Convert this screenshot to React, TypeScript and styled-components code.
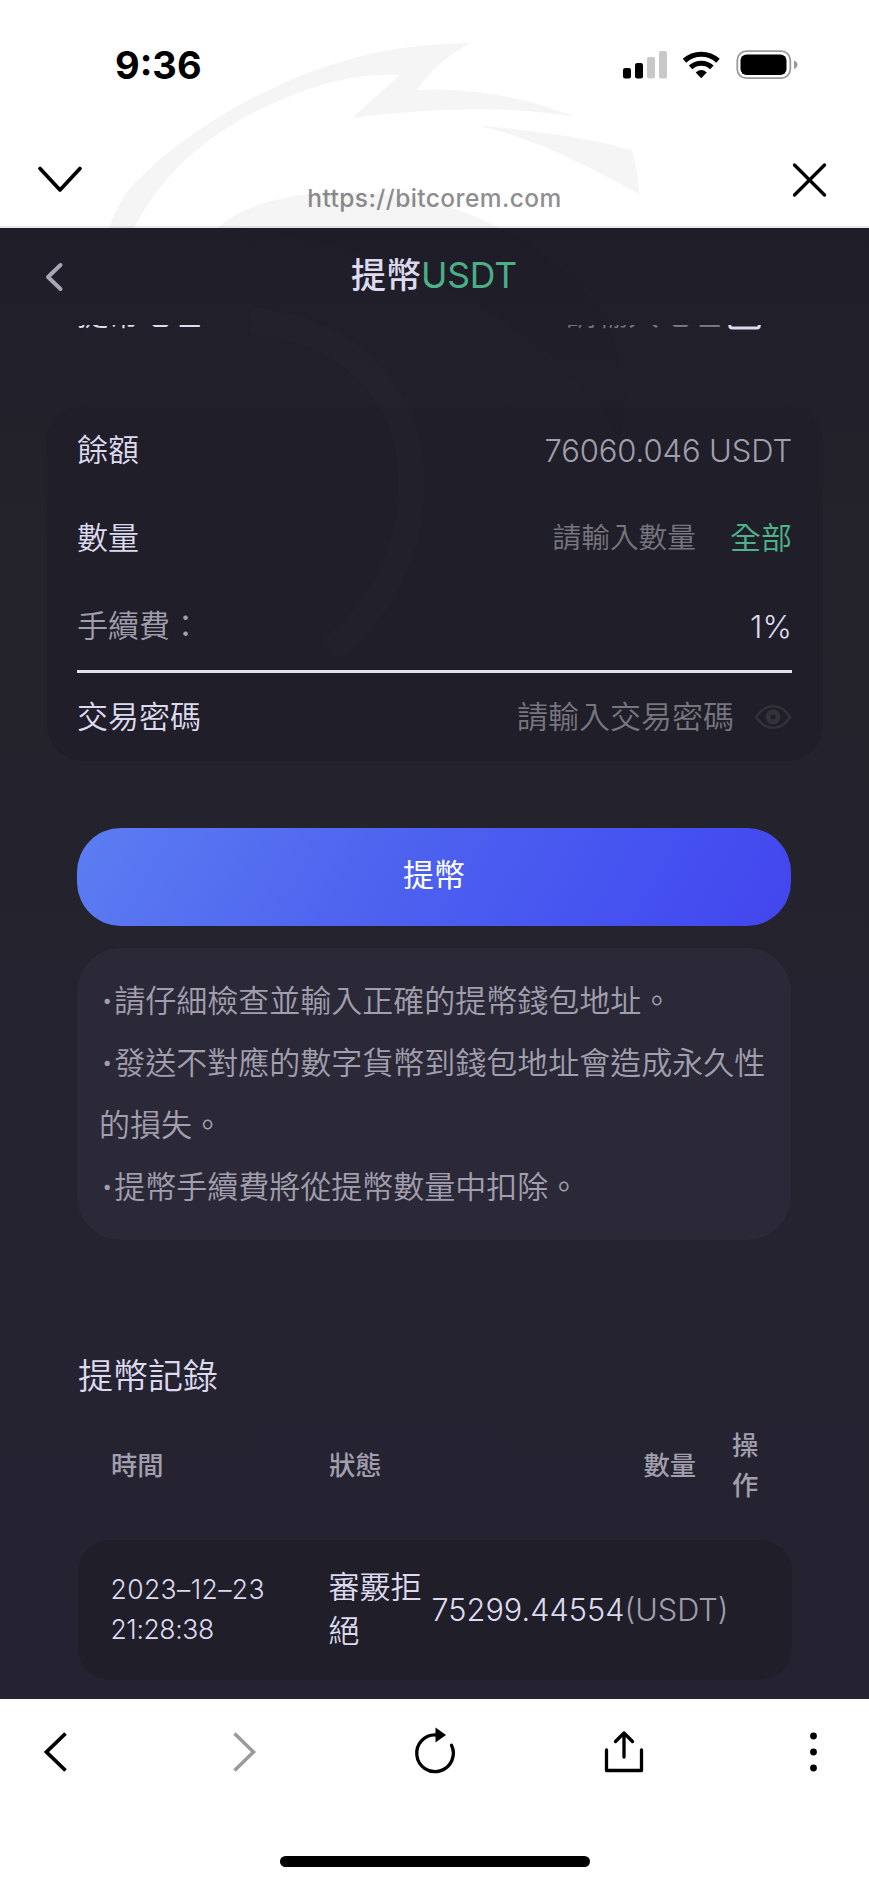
import React from "react";
import styled, { createGlobalStyle } from "styled-components";

const GlobalStyle = createGlobalStyle`
  * { box-sizing: border-box; }
  body { margin: 0; background: #fff; }
`;

const Screen = styled.div`
  position: relative;
  display: flex;
  flex-direction: column;
  width: 869px;
  height: 1885px;
  overflow: hidden;
  background: #fff;
  font-family: Inter, "Noto Sans CJK TC", sans-serif;
  font-weight: 350;
`;

const Watermark = styled.svg`
  position: absolute;
  top: 0;
  left: 0;
  pointer-events: none;
`;

const StatusBar = styled.div`
  display: flex;
  align-items: center;
  justify-content: space-between;
  height: 130px;
  padding: 0 71px 0 115px;
`;

const Clock = styled.div`
  font-size: 38px;
  font-weight: 700;
  line-height: 46px;
  color: #000;
`;

const StatusIcons = styled.svg`
  display: block;
`;

const AddressBar = styled.div`
  display: grid;
  grid-template-columns: 1fr auto 1fr;
  height: 98px;
  padding: 30px 36px 0;
  border-bottom: 2px solid #e9e9ea;
`;

const CloseIcon = styled.svg`
  justify-self: end;
  margin-right: 5px;
`;

const Url = styled.div`
  padding-top: 23px;
  font-size: 24.5px;
  font-weight: 500;
  line-height: 30px;
  letter-spacing: 0.4px;
  color: #8e8e90;
`;

const Page = styled.main`
  display: flex;
  flex-direction: column;
  height: 1471px;
  background: linear-gradient(180deg, #1f1d27 0%, #211f29 8%, #24222b 22%, #24222c 42%, #252330 60%, #252331 100%);
`;

const PageHeader = styled.header`
  display: grid;
  grid-template-columns: 60px 1fr 60px;
  align-items: center;
  height: 97px;
  padding: 0 45px 0 44px;
`;

const Title = styled.h1`
  margin: 0;
  padding-bottom: 3px;
  text-align: center;
  font-size: 35px;
  font-weight: 500;
  line-height: 94px;
  color: #dedbf0;
`;

const Currency = styled.span`
  font-size: 35.5px;
  font-weight: 400;
  letter-spacing: -0.2px;
  color: #4cb38a;
`;

const Scroller = styled.div`
  flex: 1;
  overflow: hidden;
`;

const AddressRow = styled.div`
  display: flex;
  justify-content: space-between;
  align-items: center;
  height: 40px;
  margin: -31px 108px 0 77px;
`;

const AddressField = styled.div`
  display: flex;
  align-items: center;
  gap: 7px;
`;

const Card = styled.section`
  margin: 72px 46px 0 47px;
  padding: 0 31px 0 30px;
  border-radius: 36px;
  background: #201e28;
`;

const Row = styled.div<{ $lined?: boolean }>`
  display: flex;
  justify-content: space-between;
  align-items: center;
  height: ${(p) => (p.$lined ? 91 : 88)}px;
  border-bottom: ${(p) => (p.$lined ? "3px solid #e2e1ea" : "none")};
`;

const Label = styled.span<{ $muted?: boolean }>`
  font-size: 31px;
  line-height: 44px;
  color: ${(p) => (p.$muted ? "#a09eae" : "#dddaf0")};
`;

const Balance = styled.span`
  font-size: 31px;
  font-weight: 300;
  letter-spacing: -0.1px;
  color: #a19fae;
`;

const Fee = styled.span`
  font-size: 31.5px;
  font-weight: 350;
  color: #dddaf0;
`;

const FieldGroup = styled.div<{ $gap: number }>`
  display: flex;
  align-items: center;
  gap: ${(p) => p.$gap}px;
`;

const Placeholder = styled.span<{ $size?: number }>`
  font-size: ${(p) => p.$size ?? 31}px;
  line-height: 44px;
  color: #77757e;
`;

const AllLink = styled.span`
  font-size: 31px;
  line-height: 44px;
  color: #4cb38a;
`;

const SubmitButton = styled.button`
  display: block;
  width: 714px;
  height: 98px;
  margin: 67px 0 0 77px;
  padding: 0 0 10px;
  border: 0;
  border-radius: 44px;
  background: linear-gradient(120deg, #5c7df2 0%, #4e63ef 42%, #4655f0 70%, #4245ee 100%);
  font: inherit;
  font-size: 31px;
  font-weight: 400;
  color: #fff;
`;

const Notice = styled.section`
  width: 714px;
  height: 292px;
  margin: 22px 0 0 77px;
  padding: 22px 22px;
  border-radius: 44px;
  background: #2b2937;
`;

const NoticeLine = styled.p`
  margin: 0;
  font-size: 31px;
  line-height: 62px;
  color: #a19fae;
`;

const Bullet = styled.span`
  padding: 0 2px 0 3px;
  font-weight: 700;
`;

const SectionTitle = styled.h2`
  margin: 113px 0 0 78px;
  font-size: 35px;
  font-weight: 350;
  line-height: 46px;
  color: #dddaf0;
`;

const RecordHead = styled.div`
  display: grid;
  grid-template-columns: 218px 103px 1fr 34px;
  align-items: center;
  height: 80px;
  margin: 27px 103px 0 111px;
  font-size: 26.3px;
  font-weight: 500;
  line-height: 40px;
  color: #a19fae;
`;

const HeadCell = styled.span<{ $end?: boolean; $action?: boolean }>`
  width: ${(p) => (p.$action ? "28px" : "auto")};
  padding-right: ${(p) => (p.$end ? "36px" : 0)};
  text-align: ${(p) => (p.$end ? "right" : "left")};
`;

const Record = styled.article`
  display: grid;
  grid-template-columns: 218px 103px 1fr;
  align-items: center;
  width: 714px;
  height: 140px;
  margin: 34px 0 0 77.5px;
  padding: 0 30px 2px 33px;
  border-radius: 32px;
  background: #201e28;
`;

const RecordTime = styled.time`
  font-size: 26.5px;
  line-height: 40px;
  color: #dddaf0;
`;

const DatePart = styled.span`
  display: block;
  letter-spacing: 0.4px;
`;

const ClockPart = styled.span`
  display: block;
  letter-spacing: -0.4px;
`;

const RecordStatus = styled.span`
  width: 96px;
  font-size: 31px;
  line-height: 44px;
  color: #dddaf0;
`;

const RecordAmount = styled.span`
  white-space: nowrap;
  font-size: 30.7px;
  color: #dddaf0;
`;

const Unit = styled.span`
  font-weight: 300;
  color: #a19fae;
`;

const BrowserBar = styled.nav`
  height: 186px;
  padding-top: 27px;
  background: #fff;
`;

const BrowserActions = styled.div`
  display: flex;
  justify-content: space-between;
  align-items: center;
  padding: 0 31px;
`;

const HomeIndicator = styled.div`
  width: 310px;
  height: 11px;
  margin: 78px auto 0;
  border-radius: 6px;
  background: #000;
`;

const strokeBase = { fill: "none", stroke: "#000", strokeLinecap: "round", strokeLinejoin: "round" } as const;

export default function App() {
  return (
    <Screen>
      <GlobalStyle />
      <StatusBar>
        <Clock>9:36</Clock>
        <StatusIcons width="175" height="30" viewBox="0 0 175 30">
          <rect x="0" y="18" width="8" height="10.5" rx="2.2" />
          <rect x="12" y="13" width="8" height="15.5" rx="2.2" />
          <rect x="24" y="7" width="8" height="21.5" rx="2.2" fill="#c8c8c8" />
          <rect x="36" y="1" width="8" height="27.5" rx="2.2" fill="#c8c8c8" />
          <g fill="none" stroke="#000" strokeWidth="5.2">
            <path d="M61.5 10.7A25 25 0 0 1 95 10.7" />
            <path d="M67.6 17.4A15.8 15.8 0 0 1 88.9 17.4" />
          </g>
          <path d="M72.7 22.4Q78.2 17.6 83.8 22.4L78.2 28.3Z" />
          <rect x="114.3" y="1.2" width="53" height="27" rx="9" fill="none" stroke="#9a9a9a" strokeWidth="1.8" />
          <rect x="117.5" y="4.5" width="46" height="20.5" rx="6" />
          <path d="M171 10.5Q174.5 12 174.5 14.7T171 19Z" fill="#9a9a9a" />
        </StatusIcons>
      </StatusBar>

      <AddressBar>
        <svg width="48" height="40" viewBox="0 0 48 40">
          <path d="M4 8.5L24 30L44 8.5" {...strokeBase} strokeWidth="3.7" />
        </svg>
        <Url>https://bitcorem.com</Url>
        <CloseIcon width="38" height="40" viewBox="0 0 38 40">
          <path d="M4.5 5L34.5 35M34.5 5L4.5 35" {...strokeBase} strokeWidth="3.3" />
        </CloseIcon>
      </AddressBar>

      <Page>
        <PageHeader>
          <svg width="22" height="32" viewBox="0 0 22 32">
            <path d="M16.5 4L4 16L16.5 28" fill="none" stroke="#a8a5b6" strokeWidth="4" strokeLinecap="round" strokeLinejoin="round" />
          </svg>
          <Title>
            提幣<Currency>USDT</Currency>
          </Title>
        </PageHeader>

        <Scroller>
          <AddressRow>
            <Label>提幣地址</Label>
            <AddressField>
              <Placeholder>請輸入地址</Placeholder>
              <svg width="33" height="32" viewBox="0 0 33 32">
                <rect x="1.8" y="1" width="29.5" height="29" rx="2.5" fill="none" stroke="#dddaf0" strokeWidth="3" />
              </svg>
            </AddressField>
          </AddressRow>

          <Card>
            <Row>
              <Label>餘額</Label>
              <Balance>76060.046 USDT</Balance>
            </Row>
            <Row>
              <Label>數量</Label>
              <FieldGroup $gap={34}>
                <Placeholder $size={28.7}>請輸入數量</Placeholder>
                <AllLink>全部</AllLink>
              </FieldGroup>
            </Row>
            <Row $lined>
              <Label $muted>手續費：</Label>
              <Fee>1%</Fee>
            </Row>
            <Row>
              <Label>交易密碼</Label>
              <FieldGroup $gap={20}>
                <Placeholder>請輸入交易密碼</Placeholder>
                <svg width="38" height="26" viewBox="0 0 38 26">
                  <path d="M2 13C12 -1.5 27 -1.5 36 13C27 27.5 12 27.5 2 13Z" fill="none" stroke="#33323a" strokeWidth="2.4" />
                  <circle cx="19" cy="13" r="5" fill="none" stroke="#33323a" strokeWidth="5" />
                </svg>
              </FieldGroup>
            </Row>
          </Card>

          <SubmitButton>提幣</SubmitButton>

          <Notice>
            <NoticeLine><Bullet>·</Bullet>請仔細檢查並輸入正確的提幣錢包地址。</NoticeLine>
            <NoticeLine><Bullet>·</Bullet>發送不對應的數字貨幣到錢包地址會造成永久性的損失。</NoticeLine>
            <NoticeLine><Bullet>·</Bullet>提幣手續費將從提幣數量中扣除。</NoticeLine>
          </Notice>

          <SectionTitle>提幣記錄</SectionTitle>
          <RecordHead>
            <HeadCell>時間</HeadCell>
            <HeadCell>狀態</HeadCell>
            <HeadCell $end>數量</HeadCell>
            <HeadCell $action>操作</HeadCell>
          </RecordHead>
          <Record>
            <RecordTime>
              <DatePart>2023–12–23</DatePart>
              <ClockPart>21:28:38</ClockPart>
            </RecordTime>
            <RecordStatus>審覈拒絕</RecordStatus>
            <RecordAmount>
              75299.44554<Unit>(USDT)</Unit>
            </RecordAmount>
          </Record>
        </Scroller>
      </Page>

      <BrowserBar>
        <BrowserActions>
          <svg width="50" height="52" viewBox="0 0 50 52">
            <path d="M34.5 7.5L15.5 26L34.5 44.5" {...strokeBase} strokeWidth="3.8" strokeLinecap="butt" strokeLinejoin="miter" />
          </svg>
          <svg width="50" height="52" viewBox="0 0 50 52">
            <path d="M14.5 7.5L33.5 26L14.5 44.5" {...strokeBase} stroke="#9b9b9b" strokeWidth="3.6" strokeLinecap="butt" strokeLinejoin="miter" />
          </svg>
          <svg width="50" height="52" viewBox="0 0 50 52">
            <path d="M26 9A18.3 18.3 0 1 0 41.5 19.3" {...strokeBase} strokeWidth="3.3" />
            <path d="M25.5 1.5L36 9L25.5 16.5Z" />
          </svg>
          <svg width="50" height="52" viewBox="0 0 50 52">
            <path d="M7.5 24V44.5H42.5V24M25 31V7M16.5 15.5L25 7L33.5 15.5" {...strokeBase} strokeWidth="3.3" />
          </svg>
          <svg width="50" height="52" viewBox="0 0 50 52">
            <circle cx="25.5" cy="10" r="3.4" />
            <circle cx="25.5" cy="26" r="3.4" />
            <circle cx="25.5" cy="42" r="3.4" />
          </svg>
        </BrowserActions>
        <HomeIndicator />
      </BrowserBar>

      <Watermark width="869" height="760" viewBox="0 0 869 760">
        <g fill="#000" fillOpacity="0.038">
          <path d="M109 228C120 200 128 188 140 178C180 138 240 100 300 76C350 56 400 44 471 43C450 54 432 68 417 90C465 87 528 97 575 117C510 106 440 107 352 118L400 75C350 72 300 88 240 120C190 150 160 180 134 228Z" />
          <path d="M476 125C530 130 590 138 632 150C637 170 639 180 639 194C590 168 540 140 476 125Z" />
          <path d="M217 228C270 180 410 180 500 228Z" />
        </g>
        <path d="M217 228H500C600 280 640 350 620 440C560 330 400 240 217 228Z" fill="#000" fillOpacity="0.02" />
        <path d="M250 320C450 340 450 560 330 650" fill="none" stroke="#fff" strokeOpacity="0.012" strokeWidth="26" />
      </Watermark>
    </Screen>
  );
}
